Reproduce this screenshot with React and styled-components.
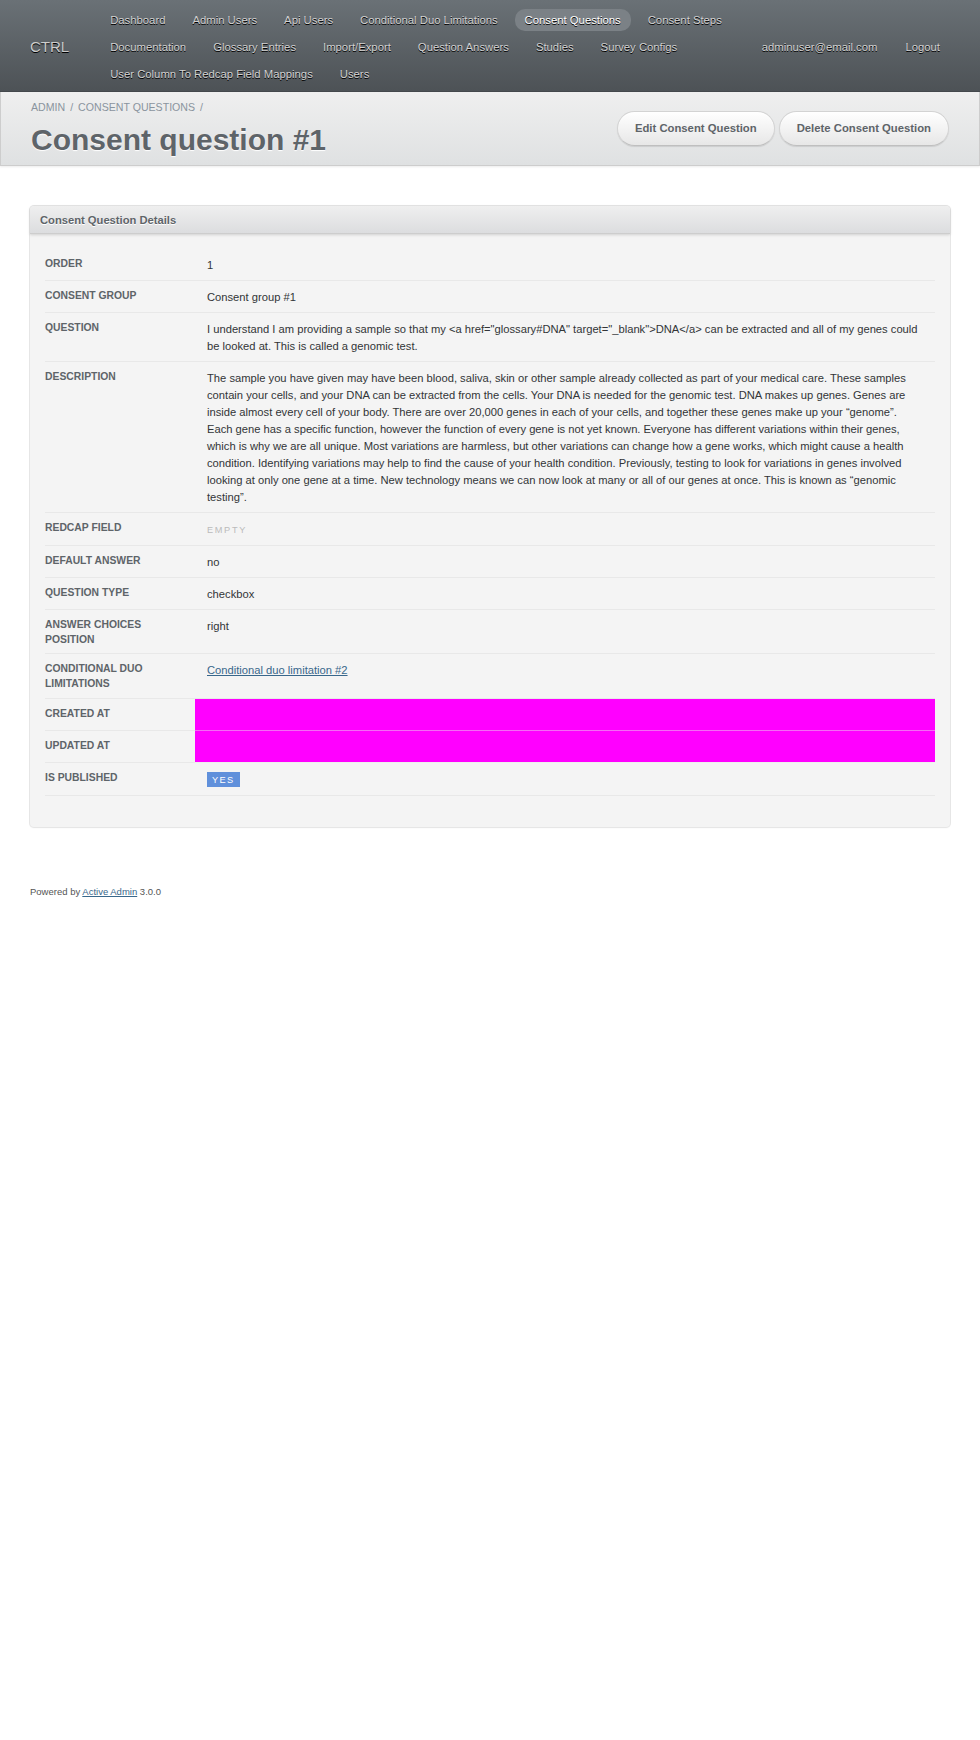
import React from 'react'
import styled, { createGlobalStyle } from 'styled-components'

const GlobalStyle = createGlobalStyle`
  body {
    margin: 0;
    background: #fff;
    color: #323537;
    font-family: "Liberation Sans", Arial, Helvetica, sans-serif;
    font-size: 11.2px;
    line-height: 17px;
  }
  a {
    color: #38678b;
  }
`

const Header = styled.div`
  display: flex;
  align-items: center;
  padding: 9px 30px 6px;
  background: linear-gradient(180deg, #6a7176 0%, #4d5256 100%);
  border-bottom: 1px solid #45494d;
`

const SiteTitle = styled.h1`
  margin: 0 31px 0 0;
  font-size: 15px;
  font-weight: normal;
  line-height: 22px;
  color: #cdcdcd;
  text-shadow: #000 0 1px 0;
`

const Tabs = styled.ul`
  flex: 1;
  display: flex;
  flex-wrap: wrap;
  row-gap: 5px;
  margin: 0;
  padding: 0;
  list-style: none;
`

const Tab = styled.li`
  margin-right: 7px;
`

const NavLink = styled.a`
  display: block;
  padding: 0 10px;
  line-height: 22px;
  border-radius: 10px;
  font-size: 11.3px;
  color: ${p => (p.$current ? '#fff' : '#d2d2d2')};
  background: ${p => (p.$current ? '#7b8186' : 'transparent')};
  text-decoration: none;
  text-shadow: #000 0 1px 0;
  white-space: nowrap;
`

const UtilityNav = styled.ul`
  display: flex;
  gap: 8px;
  margin: 0;
  padding: 0;
  list-style: none;
`

const TitleBar = styled.div`
  display: flex;
  align-items: center;
  justify-content: space-between;
  padding: 7px 30px 8px;
  background: linear-gradient(180deg, #efefef 0%, #dfe1e2 100%);
  border: 1px solid #cdcdcd;
  border-top: none;
  box-shadow: 0 1px 2px rgba(0, 0, 0, 0.08);
`

const Breadcrumb = styled.div`
  margin-bottom: 7px;
  font-size: 10.6px;
  color: #8a949e;
  text-transform: uppercase;

  a {
    color: #8a949e;
    text-decoration: none;
  }
`

const Sep = styled.span`
  margin: 0 5px;
`

const PageTitle = styled.h2`
  margin: 0;
  font-size: 30px;
  line-height: 34px;
  font-weight: bold;
  color: #5e6469;
  text-shadow: #fff 0 1px 1px;
`

const Actions = styled.div`
  display: flex;
  gap: 4px;
`

const ActionButton = styled.a`
  display: inline-block;
  padding: 8px 17px;
  border-radius: 200px;
  border: 1px solid #d3d3d3;
  border-bottom-color: #bfbfbf;
  background: linear-gradient(180deg, #ffffff 0%, #e7e7e7 100%);
  box-shadow: 0 1px 1px rgba(0, 0, 0, 0.1), inset 0 1px 0 #fff;
  color: #5e6469;
  font-size: 11.3px;
  font-weight: bold;
  text-decoration: none;
  line-height: 17px;
`

const Content = styled.div`
  padding: 40px 30px 28px;
`

const Panel = styled.div`
  background: #f4f4f4;
  border-radius: 4px;
  box-shadow: 0 0 0 1px #e6e6e6, 0 1px 2px rgba(0, 0, 0, 0.05);
`

const PanelHeader = styled.h3`
  margin: 0;
  padding: 6px 10px 4px;
  font-size: 11.2px;
  line-height: 17px;
  font-weight: bold;
  color: #5e6469;
  text-shadow: #fff 0 1px 0;
  background: linear-gradient(180deg, #efefef 0%, #dcdddf 100%);
  border-bottom: 1px solid #cdcdcd;
  border-radius: 4px 4px 0 0;
  box-shadow: 0 1px 3px rgba(0, 0, 0, 0.15);
`

const PanelContents = styled.div`
  padding: 15px 15px 31px;
`

const Table = styled.table`
  width: 100%;
  border-collapse: collapse;
  border-spacing: 0;
`

const Label = styled.th`
  width: 138px;
  padding: 8px 12px 6px 0;
  text-align: left;
  vertical-align: top;
  font-size: 10.37px;
  line-height: 14.7px;
  font-weight: bold;
  color: #5e6469;
  text-transform: uppercase;
  border-bottom: 1px solid #e8e8e8;
`

const Value = styled.td`
  padding: 8px 12px 6px;
  vertical-align: top;
  background: ${p => (p.$redacted ? '#ff00ff' : 'transparent')};
  border-bottom: 1px solid ${p => (p.$redacted ? 'rgba(232, 232, 232, 0.45)' : '#e8e8e8')};
`

const Empty = styled.span`
  color: #bbb;
  font-size: 9.2px;
  letter-spacing: 0.18em;
  text-transform: uppercase;
`

const StatusTag = styled.span`
  padding: 3px 5px 2px;
  background: #6090db;
  color: #fff;
  font-size: 9.216px;
  letter-spacing: 0.15em;
  text-transform: uppercase;
`

const Footer = styled.div`
  padding: 30px;
  font-size: 9.5px;
  line-height: 14px;
  color: #555;
`

const tabs = [
  'Dashboard',
  'Admin Users',
  'Api Users',
  'Conditional Duo Limitations',
  'Consent Questions',
  'Consent Steps',
  'Documentation',
  'Glossary Entries',
  'Import/Export',
  'Question Answers',
  'Studies',
  'Survey Configs',
  'User Column To Redcap Field Mappings',
  'Users',
]

const question =
  'I understand I am providing a sample so that my <a href="glossary#DNA" target="_blank">DNA</a> can be extracted and all of my genes could be looked at. This is called a genomic test.'

const description =
  'The sample you have given may have been blood, saliva, skin or other sample already collected as part of your medical care. These samples contain your cells, and your DNA can be extracted from the cells. Your DNA is needed for the genomic test. DNA makes up genes. Genes are inside almost every cell of your body. There are over 20,000 genes in each of your cells, and together these genes make up your \u201cgenome\u201d. Each gene has a specific function, however the function of every gene is not yet known. Everyone has different variations within their genes, which is why we are all unique. Most variations are harmless, but other variations can change how a gene works, which might cause a health condition. Identifying variations may help to find the cause of your health condition. Previously, testing to look for variations in genes involved looking at only one gene at a time. New technology means we can now look at many or all of our genes at once. This is known as \u201cgenomic testing\u201d.'

const rows = [
  { label: 'Order', value: '1' },
  { label: 'Consent Group', value: 'Consent group #1' },
  { label: 'Question', value: question },
  { label: 'Description', value: description },
  { label: 'Redcap Field', value: <Empty>Empty</Empty> },
  { label: 'Default Answer', value: 'no' },
  { label: 'Question Type', value: 'checkbox' },
  { label: 'Answer Choices Position', value: 'right' },
  { label: 'Conditional Duo Limitations', value: <a href="#">Conditional duo limitation #2</a> },
  { label: 'Created At', value: '\u00a0', redacted: true },
  { label: 'Updated At', value: '\u00a0', redacted: true },
  { label: 'Is Published', value: <StatusTag>Yes</StatusTag> },
]

const App = () => {
  return (
    <>
      <GlobalStyle />
      <Header>
        <SiteTitle>CTRL</SiteTitle>
        <Tabs>
          {tabs.map(t => (
            <Tab key={t}>
              <NavLink href="#" $current={t === 'Consent Questions'}>{t}</NavLink>
            </Tab>
          ))}
        </Tabs>
        <UtilityNav>
          <li><NavLink href="#">adminuser@email.com</NavLink></li>
          <li><NavLink href="#">Logout</NavLink></li>
        </UtilityNav>
      </Header>

      <TitleBar>
        <div>
          <Breadcrumb>
            <a href="#">Admin</a><Sep>/</Sep><a href="#">Consent Questions</a><Sep>/</Sep>
          </Breadcrumb>
          <PageTitle>Consent question #1</PageTitle>
        </div>
        <Actions>
          <ActionButton href="#">Edit Consent Question</ActionButton>
          <ActionButton href="#">Delete Consent Question</ActionButton>
        </Actions>
      </TitleBar>

      <Content>
        <Panel>
          <PanelHeader>Consent Question Details</PanelHeader>
          <PanelContents>
            <Table>
              <tbody>
                {rows.map(r => (
                  <tr key={r.label}>
                    <Label>{r.label}</Label>
                    <Value $redacted={r.redacted}>{r.value}</Value>
                  </tr>
                ))}
              </tbody>
            </Table>
          </PanelContents>
        </Panel>
      </Content>

      <Footer>
        Powered by <a href="#">Active Admin</a> 3.0.0
      </Footer>
    </>
  )
}

export default App
